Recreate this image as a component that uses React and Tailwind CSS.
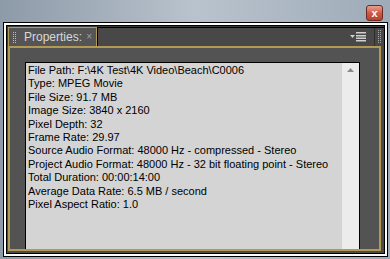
const lines = [
  "File Path: F:\\4K Test\\4K Video\\Beach\\C0006",
  "Type: MPEG Movie",
  "File Size: 91.7 MB",
  "Image Size: 3840 x 2160",
  "Pixel Depth: 32",
  "Frame Rate: 29.97",
  "Source Audio Format: 48000 Hz - compressed - Stereo",
  "Project Audio Format: 48000 Hz - 32 bit floating point - Stereo",
  "Total Duration: 00:00:14:00",
  "Average Data Rate: 6.5 MB / second",
  "Pixel Aspect Ratio: 1.0",
];

const App = () => {
  return (
    <div className="w-[390px] h-[259px] overflow-hidden bg-gradient-to-r from-[#8d9aa8] via-[#b9c3cd] to-[#9eabb8] flex flex-col">
      {/* title bar */}
      <div className="h-[22px] shrink-0 flex justify-end items-start pt-[5px] pr-[7px]">
        <div className="w-[17px] h-[16px] rounded-[3px] border border-[#6b2a22] bg-gradient-to-b from-[#e8a08f] via-[#cf5a44] to-[#b8412c] flex items-center justify-center text-white text-[11px] font-bold leading-none [font-family:'Liberation_Sans',sans-serif]">
          x
        </div>
      </div>

      {/* window frame */}
      <div className="ml-[3px] mr-[2px] h-[235px] border border-black">
        <div className="h-full border-2 border-white">
          <div className="h-full border border-black bg-[#4b4b4b] flex flex-col">
            {/* tab bar */}
            <div className="h-[20px] shrink-0 flex items-stretch pl-[1px] pt-[1px] bg-[#3b3b3b]">
              <div className="w-[89px] border-t border-l border-r border-[#b29a55] bg-[#555555] flex items-center pl-[4px] pr-[4px]">
                <div className="flex gap-[1px] h-[11px]">
                  <div className="w-[1px] h-full bg-[repeating-linear-gradient(to_bottom,#bdbdbd_0_1px,transparent_1px_2px)]" />
                  <div className="w-[1px] h-full bg-[repeating-linear-gradient(to_bottom,#bdbdbd_0_1px,transparent_1px_2px)]" />
                </div>
                <span className="ml-[8px] text-[12px] text-[#d8d8d8] [font-family:'Liberation_Sans',sans-serif]">
                  Properties:
                </span>
                <span className="ml-auto text-[10px] leading-none text-[#a0a0a0] [font-family:'Liberation_Sans',sans-serif]">
                  ×
                </span>
              </div>
              <div className="flex-1 border-t border-l border-black bg-[#484848] flex items-center justify-end">
                <svg width="16" height="10" viewBox="0 0 16 10" className="mr-[8px]">
                  <path d="M0 3h5l-2.5 3z" fill="#d0d0d0" />
                  <rect x="6" y="0" width="10" height="1.5" fill="#d0d0d0" />
                  <rect x="6" y="3" width="10" height="1.5" fill="#d0d0d0" />
                  <rect x="6" y="5.5" width="10" height="1.5" fill="#d0d0d0" />
                  <rect x="6" y="8" width="10" height="1.5" fill="#d0d0d0" />
                </svg>
                <div className="w-[1px] h-full bg-[#2e2e2e]" />
                <div className="flex gap-[1px] h-[14px] mx-[3px]">
                  <div className="w-[1px] h-full bg-[repeating-linear-gradient(to_bottom,#aaaaaa_0_1px,transparent_1px_2px)]" />
                  <div className="w-[1px] h-full bg-[repeating-linear-gradient(to_bottom,#aaaaaa_0_1px,transparent_1px_2px)]" />
                </div>
              </div>
            </div>

            {/* content panel */}
            <div className="flex-1 min-h-0 ml-[1px] mr-[3px] mb-[2px] border-2 border-[#b29a55] bg-[#535353] pl-[15px] pt-[14px] pr-[19px] flex">
              <div className="flex-1 border-t border-l border-r border-black flex">
                <div className="flex-1 bg-[#d4d4d4] pl-[2px] pt-[1px] text-[11px] leading-[13.4px] text-black [font-family:'Liberation_Sans',sans-serif] whitespace-nowrap overflow-hidden">
                  {lines.map((l) => (
                    <div key={l}>{l}</div>
                  ))}
                </div>
                <div className="w-[17px] bg-[#ececec] flex justify-center pt-[5px]">
                  <svg width="7" height="4" viewBox="0 0 7 4">
                    <path d="M0 4L3.5 0L7 4z" fill="#8a8a8a" />
                  </svg>
                </div>
              </div>
            </div>
          </div>
        </div>
      </div>
    </div>
  );
};

export default App;
